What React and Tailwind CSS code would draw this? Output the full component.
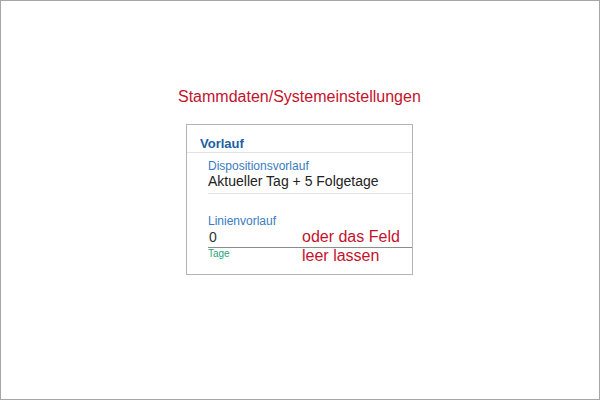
export default function App() {
  return (
    <div
      className="w-[600px] h-[400px] border border-[#a6a6a6] bg-white flex flex-col"
      style={{ fontFamily: '"Liberation Sans", Arial, sans-serif' }}
    >
      <h1 className="mt-[86px] ml-[177px] text-[16px] leading-[20px] text-[#c4122c]">
        Stammdaten/Systemeinstellungen
      </h1>

      <div className="relative mt-[17px] ml-[185px] w-[227px] h-[151px] border border-[#b4b4b4]">
        <div className="pt-[11px] pl-[13px] border-b border-[#e3e3e3]">
          <div className="text-[13px] leading-[16px] font-bold text-[#1d5fa3]">Vorlauf</div>
        </div>

        <div className="ml-[21px] pt-[6px] pb-[4px] border-b border-[#e3e3e3]">
          <div className="text-[12px] leading-[14px] text-[#3a7bbf]">Dispositionsvorlauf</div>
          <div className="text-[14px] leading-[16px] text-[#222]">Aktueller Tag + 5 Folgetage</div>
        </div>

        <div className="ml-[21px] mt-[20px]">
          <div className="text-[12px] leading-[14px] text-[#3a7bbf]">Linienvorlauf</div>
          <div className="pl-[1px] pt-[1px] pb-[2px] border-b border-[#8c8c8c] text-[14px] leading-[16px] text-[#333]">
            0
          </div>
          <div className="text-[10px] leading-[12px] text-[#2aa57b]">Tage</div>
        </div>

        <div className="absolute left-[115px] top-[102px] text-[16px] leading-[19px] text-[#c4122c]">
          <div>oder das Feld</div>
          <div>leer lassen</div>
        </div>
      </div>
    </div>
  );
}
